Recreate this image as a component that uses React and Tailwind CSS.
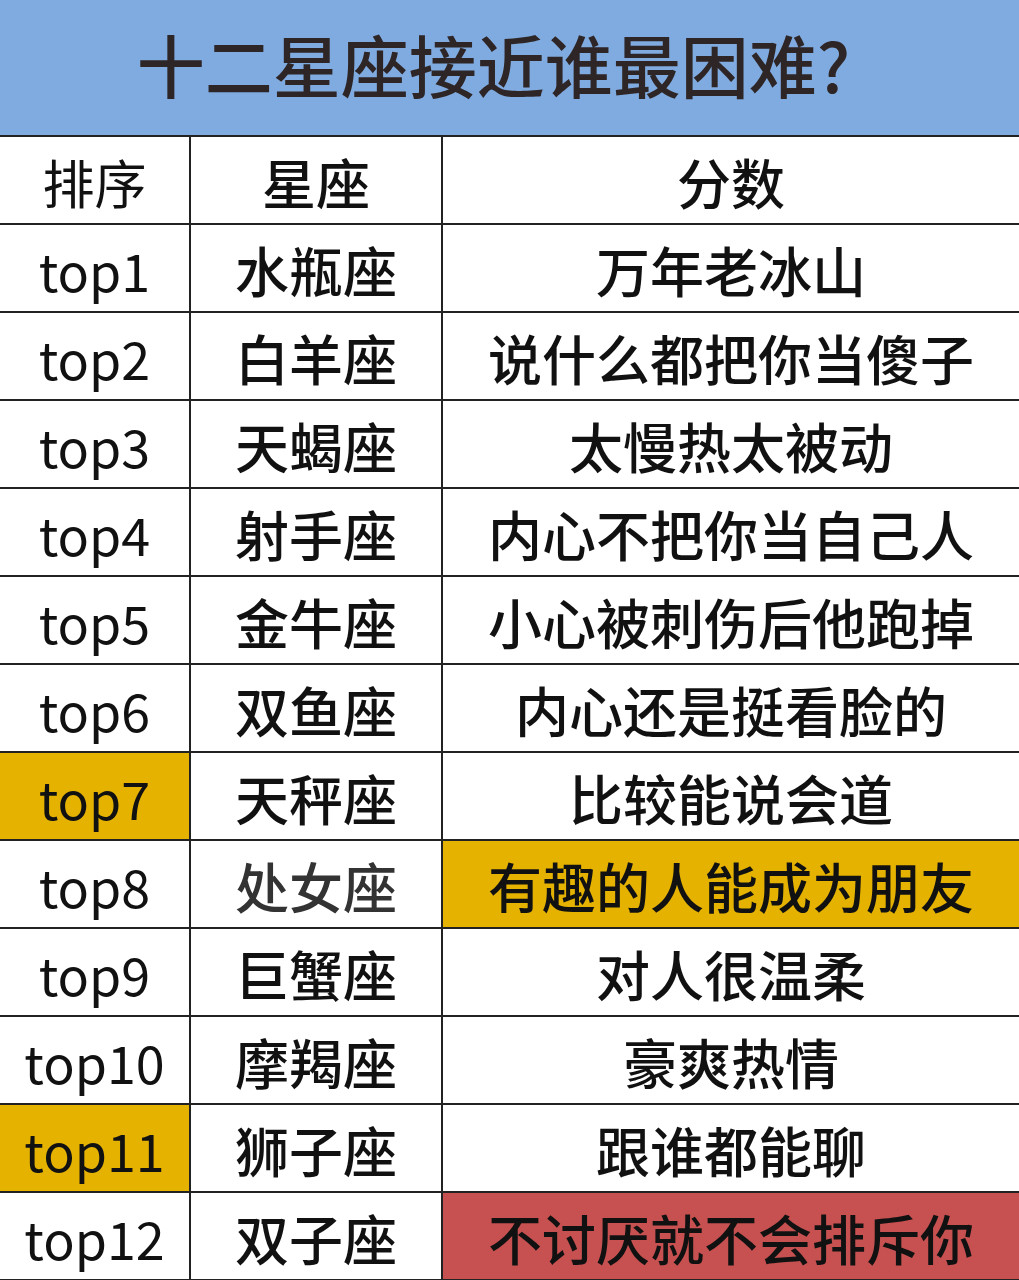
const rows = [
    { rank: 'top1', sign: '水瓶座', desc: '万年老冰山' },
    { rank: 'top2', sign: '白羊座', desc: '说什么都把你当傻子' },
    { rank: 'top3', sign: '天蝎座', desc: '太慢热太被动' },
    { rank: 'top4', sign: '射手座', desc: '内心不把你当自己人' },
    { rank: 'top5', sign: '金牛座', desc: '小心被刺伤后他跑掉' },
    { rank: 'top6', sign: '双鱼座', desc: '内心还是挺看脸的' },
    { rank: 'top7', sign: '天秤座', desc: '比较能说会道', rankBg: 'bg-[#e5b200]' },
    { rank: 'top8', sign: '处女座', desc: '有趣的人能成为朋友', descBg: 'bg-[#e5b200]', signColor: 'text-[#333]' },
    { rank: 'top9', sign: '巨蟹座', desc: '对人很温柔' },
    { rank: 'top10', sign: '摩羯座', desc: '豪爽热情' },
    { rank: 'top11', sign: '狮子座', desc: '跟谁都能聊', rankBg: 'bg-[#e5b200]' },
    { rank: 'top12', sign: '双子座', desc: '不讨厌就不会排斥你', descBg: 'bg-[#c65150]' },
];

function Row({ rank, sign, desc, rankBg = 'bg-white', descBg = 'bg-white', signColor = 'text-[#111]' }) {
    return (
        <div className="grid grid-cols-[191px_252px_1fr] h-[88px] border-b-2 border-[#222]">
            <div className={`${rankBg} border-r-2 border-[#222] flex items-center justify-center pt-1 text-[52px]`}>{rank}</div>
            <div className={`bg-white ${signColor} border-r-2 border-[#222] flex items-center justify-center pt-1 font-medium`}>{sign}</div>
            <div className={`${descBg} flex items-center justify-center pt-1 font-medium`}>{desc}</div>
        </div>
    );
}

export default function App() {
    return (
        <div className="w-[1019px] h-[1280px] overflow-hidden bg-white text-[#111] text-[54px] leading-none font-['Noto_Sans_CJK_SC',sans-serif]">
            <div className="h-[137px] bg-[#80abe0] border-b-2 border-[#222] flex items-center justify-center pr-8">
                <h1 className="text-[68px] font-medium text-[#2e2626] -mt-2">十二星座接近谁最困难?</h1>
            </div>
            <Row rank="排序" sign="星座" desc="分数" />
            {rows.map((r) => (
                <Row key={r.rank} {...r} />
            ))}
        </div>
    );
}
